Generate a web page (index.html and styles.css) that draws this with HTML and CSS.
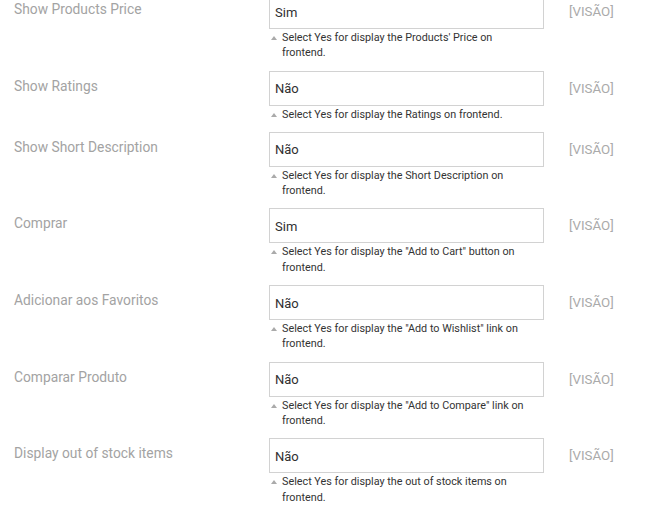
FILE: index.html
```html
<!DOCTYPE html>
<html>
<head>
<meta charset="utf-8">
<link rel="stylesheet" href="styles.css">
</head>
<body>
<div class="form">
  <div class="row">
    <div class="label">Show Products Price</div>
    <div class="control">
      <div class="select">Sim</div>
      <div class="note"><span class="tri"></span><span class="note-text">Select Yes for display the Products' Price on frontend.</span></div>
    </div>
    <div class="scope">[VISÃO]</div>
  </div>
  <div class="row">
    <div class="label">Show Ratings</div>
    <div class="control">
      <div class="select">Não</div>
      <div class="note"><span class="tri"></span><span class="note-text">Select Yes for display the Ratings on frontend.</span></div>
    </div>
    <div class="scope">[VISÃO]</div>
  </div>
  <div class="row">
    <div class="label">Show Short Description</div>
    <div class="control">
      <div class="select">Não</div>
      <div class="note"><span class="tri"></span><span class="note-text">Select Yes for display the Short Description on frontend.</span></div>
    </div>
    <div class="scope">[VISÃO]</div>
  </div>
  <div class="row">
    <div class="label">Comprar</div>
    <div class="control">
      <div class="select">Sim</div>
      <div class="note"><span class="tri"></span><span class="note-text">Select Yes for display the "Add to Cart" button on frontend.</span></div>
    </div>
    <div class="scope">[VISÃO]</div>
  </div>
  <div class="row">
    <div class="label">Adicionar aos Favoritos</div>
    <div class="control">
      <div class="select">Não</div>
      <div class="note"><span class="tri"></span><span class="note-text">Select Yes for display the "Add to Wishlist" link on frontend.</span></div>
    </div>
    <div class="scope">[VISÃO]</div>
  </div>
  <div class="row">
    <div class="label">Comparar Produto</div>
    <div class="control">
      <div class="select">Não</div>
      <div class="note"><span class="tri"></span><span class="note-text">Select Yes for display the "Add to Compare" link on frontend.</span></div>
    </div>
    <div class="scope">[VISÃO]</div>
  </div>
  <div class="row">
    <div class="label">Display out of stock items</div>
    <div class="control">
      <div class="select">Não</div>
      <div class="note"><span class="tri"></span><span class="note-text">Select Yes for display the out of stock items on frontend.</span></div>
    </div>
    <div class="scope">[VISÃO]</div>
  </div>
</div>
</body>
</html>
```
FILE: styles.css
```css
html, body {
  margin: 0;
  padding: 0;
  background: #fff;
}
body {
  font-family: Roboto, "Liberation Sans", sans-serif;
}
.form {
  display: flex;
  flex-direction: column;
  gap: 10px;
  margin-top: -6px;
}
.row {
  display: flex;
  align-items: flex-start;
}
.label {
  box-sizing: border-box;
  width: 269px;
  padding-left: 14px;
  padding-top: 7px;
  font-size: 13.8px;
  line-height: 16px;
  color: #a3a3a3;
}
.control {
  width: 275px;
}
.select {
  box-sizing: border-box;
  height: 35px;
  border: 1px solid #d2d2d2;
  padding: 1px 6px 0 5px;
  display: flex;
  align-items: center;
  font-size: 13px;
  color: #303030;
}
.note {
  display: flex;
  margin-top: 1px;
  font-size: 10.8px;
  line-height: 15.3px;
  color: #333;
}
.tri {
  flex: none;
  width: 13px;
  height: 15px;
  position: relative;
}
.tri::before {
  content: "";
  position: absolute;
  left: 2px;
  top: 6px;
  border-left: 3px solid transparent;
  border-right: 3px solid transparent;
  border-bottom: 4px solid #aaa;
}
.note-text {
  width: 248px;
}
.scope {
  margin-left: 25px;
  padding-top: 10px;
  font-size: 13.3px;
  line-height: 16px;
  color: #aaa;
}
```
